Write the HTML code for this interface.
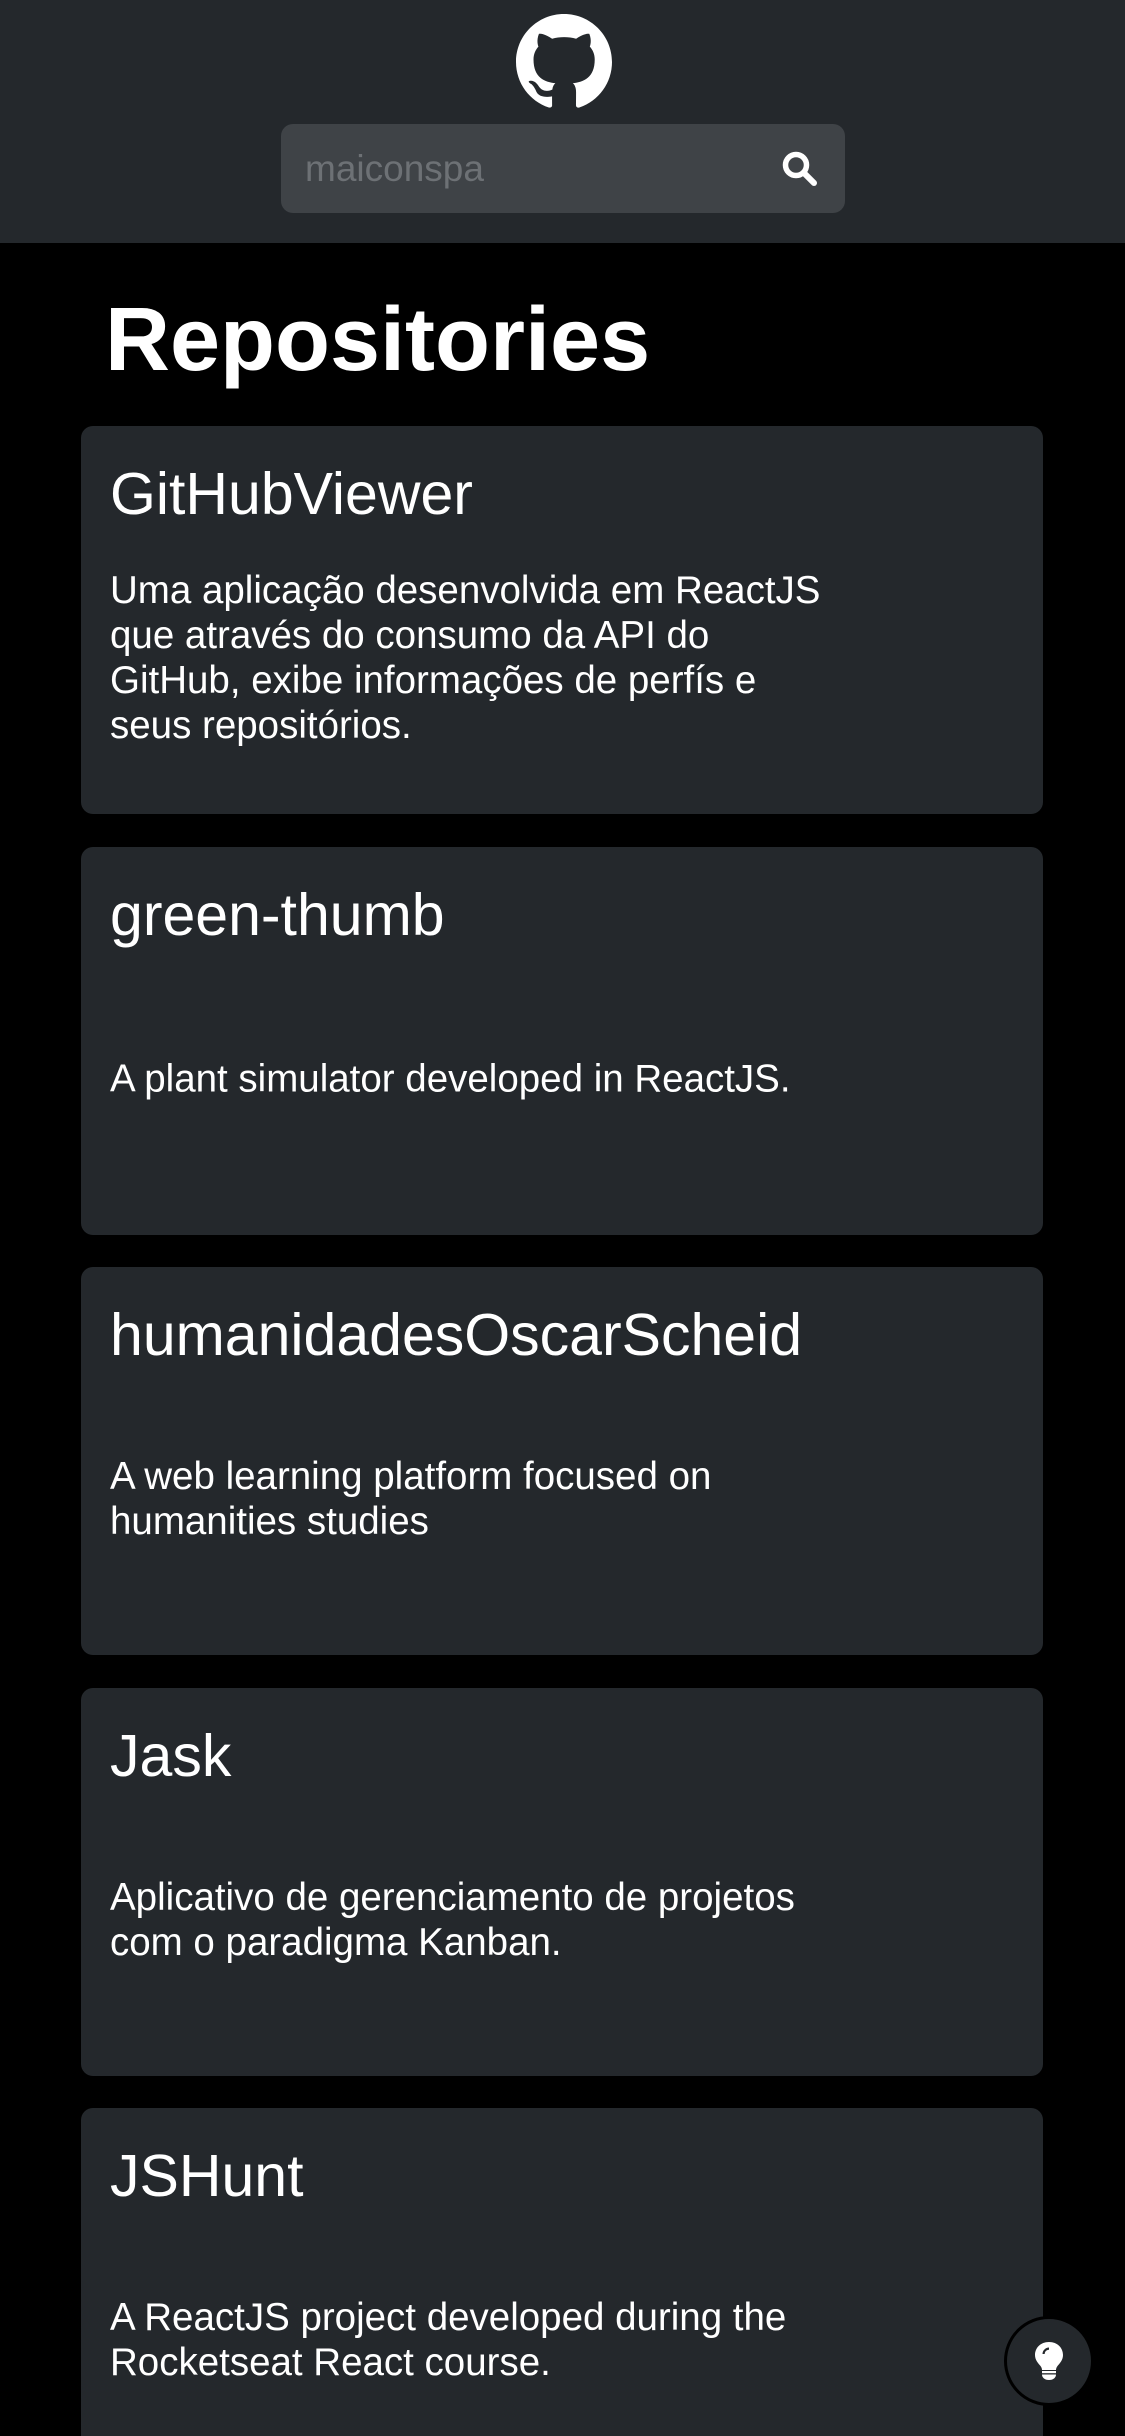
<!DOCTYPE html>
<html><head><meta charset="utf-8"><style>
html,body{margin:0;padding:0;width:1125px;height:2436px;overflow:hidden;}
body{background:#000;position:relative;font-family:"Liberation Sans",Arial,sans-serif;color:#fff;}
.hdr{position:absolute;left:0;top:0;width:1125px;height:243px;background:#24282c;}
.logo{position:absolute;left:516px;top:14px;width:96px;height:96px;}
.search{position:absolute;left:281px;top:124px;width:564px;height:89px;background:#3f4347;border-radius:12px;}
.search span{position:absolute;left:24px;top:0;line-height:89px;font-size:37px;color:#6d7175;}
.search svg{position:absolute;left:500px;top:26px;}
h1{position:absolute;left:105px;top:290px;margin:0;font-size:90px;font-weight:bold;line-height:100px;}
.card{position:absolute;left:81px;width:962px;height:388px;background:#24282c;border-radius:12px;}
.card .t{position:absolute;left:29px;top:33px;font-size:59px;line-height:70px;white-space:nowrap;}
.card .d{position:absolute;left:29px;top:232px;transform:translateY(-50%);font-size:38.5px;line-height:45px;white-space:nowrap;}
.bulb{position:absolute;left:1004px;top:2316px;width:84px;height:84px;border-radius:50%;background:#24282c;border:3px solid #000;}
.bulb svg{position:absolute;left:25px;top:22px;}
</style></head><body>
<div class="hdr">
<svg class="logo" viewBox="0 0 16 16"><path fill="#fff" d="M8 0C3.58 0 0 3.58 0 8c0 3.54 2.290 6.53 5.47 7.59.4.07.55-.17.55-.38 0-.19-.01-.82-.01-1.49-2.01.37-2.530-.49-2.690-.94-.09-.23-.48-.94-.82-1.130-.28-.15-.68-.52-.01-.53.63-.01 1.08.58 1.23.82.72 1.21 1.87.87 2.33.66.07-.52.28-.87.51-1.07-1.78-.2-3.64-.89-3.64-3.950 0-.87.31-1.59.82-2.150-.08-.2-.36-1.02.08-2.12 0 0 .67-.21 2.2.82.64-.18 1.32-.27 2-.27.68 0 1.36.09 2 .27 1.53-1.04 2.2-.82 2.2-.82.44 1.1.16 1.92.08 2.12.51.56.82 1.27.82 2.15 0 3.070-1.87 3.75-3.65 3.95.29.25.54.73.54 1.48 0 1.07-.01 1.93-.01 2.2 0 .21.15.46.55.38A8.013 8.013 0 0016 8c0-4.42-3.580-8-8-8z"/></svg>
<div class="search"><span>maiconspa</span>
<svg width="38" height="38" viewBox="0 0 38 38"><circle cx="15" cy="15" r="10.5" fill="none" stroke="#fff" stroke-width="5.5"/><line x1="23" y1="23" x2="33" y2="33" stroke="#fff" stroke-width="6" stroke-linecap="round"/></svg></div>
</div>
<h1>Repositories</h1>
<div class="card" style="top:426px"><div class="t">GitHubViewer</div><div class="d">Uma aplicação desenvolvida em ReactJS<br>que através do consumo da API do<br>GitHub, exibe informações de perfís e<br>seus repositórios.</div></div>
<div class="card" style="top:847px"><div class="t">green-thumb</div><div class="d">A plant simulator developed in ReactJS.</div></div>
<div class="card" style="top:1267px"><div class="t">humanidadesOscarScheid</div><div class="d">A web learning platform focused on<br>humanities studies</div></div>
<div class="card" style="top:1688px"><div class="t">Jask</div><div class="d">Aplicativo de gerenciamento de projetos<br>com o paradigma Kanban.</div></div>
<div class="card" style="top:2108px;height:328px;border-radius:12px 12px 0 0"><div class="t">JSHunt</div><div class="d">A ReactJS project developed during the<br>Rocketseat React course.</div></div>
<div class="bulb"><svg width="34" height="40" viewBox="0 0 34 40"><path fill="#fff" d="M17 1C8.5 1 3 7 3 14c0 5 3 8 5.5 11 1.2 1.5 1.5 3 1.5 4h14c0-1 .3-2.5 1.5-4C28 22 31 19 31 14 31 7 25.5 1 17 1z"/><path fill="#24282c" d="M10.5 13c0-3.5 3-6.5 6.5-6.5v2.2c-2.5 0-4.300 2-4.3 4.3z"/><rect x="10" y="30" width="14" height="2.2" fill="#fff"/><path fill="#fff" d="M10 33.5h14c0 3-2.5 5.5-7 5.5s-7-2.5-7-5.5z"/></svg></div>
</body></html>
